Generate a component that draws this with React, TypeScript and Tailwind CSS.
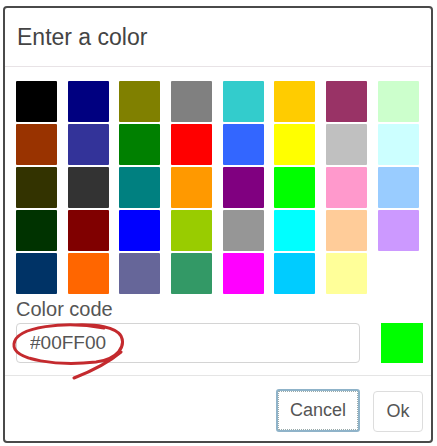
import React from 'react'

const colors = [
  '#000000', '#000080', '#808000', '#808080', '#33CCCC', '#FFCC00', '#993366', '#CCFFCC',
  '#993300', '#333399', '#008000', '#FF0000', '#3366FF', '#FFFF00', '#C0C0C0', '#CCFFFF',
  '#333300', '#333333', '#008080', '#FF9900', '#800080', '#00FF00', '#FF99CC', '#99CCFF',
  '#003300', '#800000', '#0000FF', '#99CC00', '#969696', '#00FFFF', '#FFCC99', '#CC99FF',
  '#003366', '#FF6600', '#666699', '#339966', '#FF00FF', '#00CCFF', '#FFFF99',
]

export default function App() {
  return (
    <div className="relative w-[437px] h-[446px] bg-white pt-[6px] pl-[3px]" style={{ fontFamily: '"Liberation Sans", Arial, sans-serif' }}>
      <div className="w-[430px] h-[437px] border-2 border-[#4a4a4a] rounded-[4px] flex flex-col">
        <div className="h-[59px] border-b border-[#e8e3e6] flex items-center px-[12px]">
          <h1 className="text-[23px] text-[#444] leading-none">Enter a color</h1>
        </div>

        <div className="pl-[11px] pr-[5px] pt-[14px]">
          <div className="grid grid-cols-[repeat(8,41px)] gap-x-[10.7px] gap-y-[2px]">
            {colors.map(c => (
              <div key={c} className="h-[41px] rounded-[1px]" style={{ backgroundColor: c }} />
            ))}
          </div>

          <div className="mt-[3px] text-[20px] leading-[24px] text-[#555]">Color code</div>

          <div className="mt-[2px] flex items-center">
            <input
              readOnly
              value="#00FF00"
              className="shrink-0 w-[344px] h-[40px] border border-[#d4d4d4] rounded-[4px] pl-[13px] text-[19px] text-[#555] outline-none"
            />
            <div className="shrink-0 ml-[21px] w-[42px] h-[40px] bg-[#00FF00]" />
          </div>
        </div>

        <div className="mt-[12px] border-t border-[#e5e5e5] flex-1 flex justify-end items-start pt-[13px] pr-[8px] gap-[13px]">
          <button className="w-[84px] h-[43px] border-2 border-[#8fb3c9] rounded-[3px] text-[18px] text-[#555] bg-white outline-1 outline-dotted outline-[#9aa] -outline-offset-3">
            Cancel
          </button>
          <button className="w-[50px] h-[41px] mt-[2px] border border-[#ddd] rounded-[4px] text-[18px] text-[#555] bg-white">
            Ok
          </button>
        </div>
      </div>

      {/* hand-drawn annotation around the code */}
      <svg className="absolute left-0 top-0 pointer-events-none" width="437" height="446" viewBox="0 0 437 446" fill="none">
        <path
          d="M104 328 C66 321 16 326 14 344 C12 361 60 366 96 362 C118 359 126 346 121 336 C116 327 96 324 74 325 M121 352 C108 363 92 371 74 378"
          stroke="#c42a2e"
          strokeWidth="3"
          strokeLinecap="round"
        />
      </svg>
    </div>
  )
}
